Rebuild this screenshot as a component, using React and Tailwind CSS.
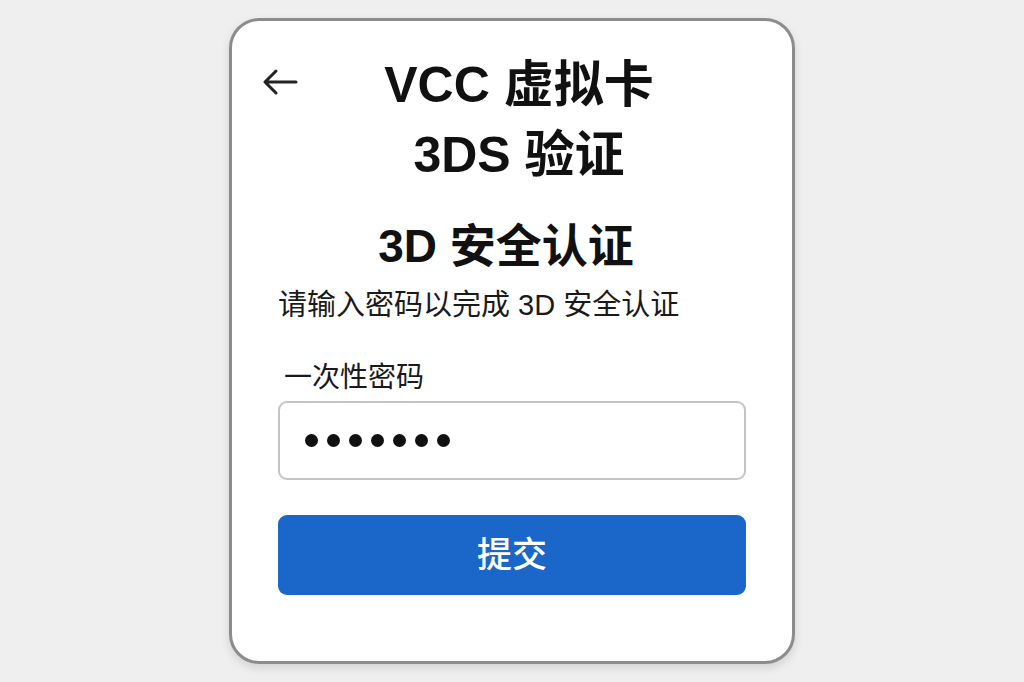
import React from "react";

const font = { fontFamily: '"Liberation Sans", "Noto Sans CJK SC", sans-serif' };

const BackArrow = () => (
  <svg width="36" height="28" viewBox="0 0 36 28" fill="none">
    <path
      d="M34 14H3M14 3L3 14L14 25"
      stroke="#222"
      strokeWidth="3"
      strokeLinecap="round"
      strokeLinejoin="round"
    />
  </svg>
);

const App = () => {
  const dots = [1, 2, 3, 4, 5, 6, 7];

  return (
    <div
      className="w-[1024px] h-[682px] bg-[#efefef] flex justify-center pt-[18px]"
      style={font}
    >
      <div className="w-[566px] h-[646px] bg-white border-[3px] border-[#8c8c8c] rounded-[30px] shadow-[0_4px_10px_rgba(0,0,0,0.12)] flex flex-col">
        {/* header */}
        <div className="flex items-start pt-[29px] pl-[30px]">
          <button className="mt-[18px] w-[36px]">
            <BackArrow />
          </button>
          <h1 className="flex-1 text-center pr-[52px] text-[50px] leading-[70px] font-bold text-[#111]">
            VCC 虚拟卡
            <br />
            3DS 验证
          </h1>
        </div>

        <div className="px-[46px] flex flex-col">
          <h2 className="mt-[28px] text-center pr-[12px] text-[46px] leading-[56px] font-bold text-[#111]">
            3D 安全认证
          </h2>
          <p className="mt-[13px] text-[29px] leading-[36px] text-[#1a1a1a]">
            请输入密码以完成 3D 安全认证
          </p>

          <label className="mt-[37px] pl-[6px] text-[28px] leading-[36px] text-[#1a1a1a]">
            一次性密码
          </label>
          <div className="mt-[5px] h-[79px] border-2 border-[#c4c4c4] rounded-[9px] flex items-center pl-[25px] gap-[9px]">
            {dots.map((d) => (
              <span key={d} className="w-[13px] h-[13px] rounded-full bg-[#111]"></span>
            ))}
          </div>

          <button className="mt-[35px] h-[80px] bg-[#1a66c9] rounded-[9px] text-white text-[35px] font-medium">
            提交
          </button>
        </div>
      </div>
    </div>
  );
};

export default App;
